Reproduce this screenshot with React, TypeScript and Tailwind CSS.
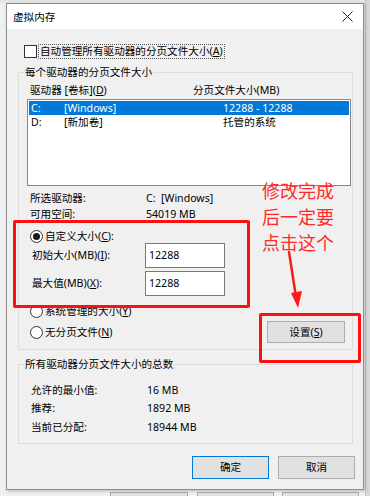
import React from "react";

function Radio({ checked }: { checked?: boolean }) {
  return (
    <span className="w-[13px] h-[13px] rounded-full border border-[#333] bg-white flex items-center justify-center shrink-0">
      {checked && <span className="w-[7px] h-[7px] rounded-full bg-[#1a1a1a]" />}
    </span>
  );
}

function GroupBox({ title, className, children }: { title: string; className?: string; children: React.ReactNode }) {
  return (
    <div className={"relative border border-[#dcdcdc] " + (className ?? "")}>
      <span className="absolute left-[5px] -top-[8px] bg-[#f0f0f0] px-[1px] leading-[14px]">{title}</span>
      {children}
    </div>
  );
}

export default function App() {
  return (
    <div className="relative w-[370px] h-[496px] overflow-hidden bg-[#f0f0f0] pt-[3px] pl-[6px] font-['Noto_Sans','Noto_Sans_CJK_SC',sans-serif] text-[10.6px] leading-[13px] text-black">
      {/* stuff behind the dialog */}
      <div className="absolute left-0 top-0 w-[370px] h-[3px] bg-[#e6e6e6]" />
      <div className="absolute right-0 top-0 w-[5px] h-[496px] bg-[#d8d8d8] border-l border-[#c4c4c4]" />
      <div className="absolute left-[110px] top-[492px] w-[78px] h-[10px] bg-[#e1e1e1] border border-[#adadad]" />
      <div className="absolute left-[197px] top-[492px] w-[77px] h-[10px] bg-[#e1e1e1] border border-[#adadad]" />
      <div className="absolute left-[282px] top-[492px] w-[77px] h-[10px] bg-[#e1e1e1] border border-[#adadad]" />

      {/* dialog */}
      <div className="relative w-[358px] h-[487px] border border-[#8f8f8f] bg-[#f0f0f0] shadow-[1px_1px_3px_rgba(0,0,0,0.25)] flex flex-col">
        {/* title bar */}
        <div className="h-[25px] bg-white flex items-center justify-between pl-[6px] pr-[10px]">
          <span className="font-['Noto_Sans_CJK_SC',sans-serif] leading-[14px] text-black">虚拟内存</span>
          <svg width="11" height="11" viewBox="0 0 11 11">
            <path d="M0.5 0.5 L10.5 10.5 M10.5 0.5 L0.5 10.5" stroke="#222" strokeWidth="1" />
          </svg>
        </div>

        {/* auto manage */}
        <div className="mt-[15px] ml-[17px] h-[14px] flex items-center gap-[1px]">
          <span className="w-[13px] h-[13px] border border-[#333] bg-white shrink-0" />
          <span className="border border-dotted border-[#555] px-[1px] leading-[13px]">
            自动管理所有驱动器的分页文件大小(<u>A</u>)
          </span>
        </div>

        {/* per-drive */}
        <GroupBox title="每个驱动器的分页文件大小" className="mt-[14px] ml-[11px] mr-[10px] h-[278px] flex flex-col">
          <div className="mt-[9px] h-[16px] pl-[11px] flex items-center">
            <span className="w-[163px]">
              驱动器 [卷标](<u>D</u>)
            </span>
            <span>分页文件大小(MB)</span>
          </div>
          <div className="mt-[1px] ml-[8px] mr-[1px] h-[87px] border border-[#828790] bg-white pt-[1px]">
            <div className="mx-[1px] h-[14px] bg-[#0078d7] text-white flex items-center pl-[2px]">
              <span className="w-[33px]">C:</span>
              <span className="w-[159px]">[Windows]</span>
              <span>12288 - 12288</span>
            </div>
            <div className="mx-[1px] h-[14px] flex items-center pl-[2px]">
              <span className="w-[33px]">D:</span>
              <span className="w-[159px]">[新加卷]</span>
              <span>托管的系统</span>
            </div>
          </div>

          <div className="mt-[5px] h-[15px] pl-[11px] flex items-center">
            <span className="w-[116px]">所选驱动器:</span>
            <span>C:&nbsp;&nbsp;[Windows]</span>
          </div>
          <div className="h-[16px] pl-[11px] flex items-center">
            <span className="w-[116px]">可用空间:</span>
            <span>54019 MB</span>
          </div>

          <div className="mt-[7px] h-[14px] pl-[11px] flex items-center gap-[2px]">
            <Radio checked />
            <span>
              自定义大小(<u>C</u>):
            </span>
          </div>
          <div className="h-[25px] pl-[13px] flex items-center">
            <span className="w-[113px]">
              初始大小(MB)(<u>I</u>):
            </span>
            <div className="w-[80px] h-[25px] border border-[#7a7a7a] bg-white pl-[3px] pt-[3px] leading-[16px]">12288</div>
          </div>
          <div className="mt-[3px] h-[25px] pl-[13px] flex items-center">
            <span className="w-[113px]">
              最大值(MB)(<u>X</u>):
            </span>
            <div className="w-[80px] h-[25px] border border-[#7a7a7a] bg-white pl-[3px] pt-[3px] leading-[16px]">12288</div>
          </div>

          <div className="mt-[8px] h-[14px] pl-[11px] flex items-center gap-[2px]">
            <Radio />
            <span>
              系统管理的大小(<u>Y</u>)
            </span>
          </div>
          <div className="mt-[3px] h-[22px] pl-[11px] pr-[7px] flex items-center">
            <div className="flex items-center gap-[2px] flex-1">
              <Radio />
              <span>
                无分页文件(<u>N</u>)
              </span>
            </div>
            <button className="w-[78px] h-[22px] bg-[#e1e1e1] border border-[#adadad] text-[10.6px] text-black leading-[20px]">
              设置(<u>S</u>)
            </button>
          </div>
        </GroupBox>

        {/* totals */}
        <GroupBox title="所有驱动器分页文件大小的总数" className="mt-[14px] ml-[11px] mr-[10px] h-[80px] flex flex-col">
          <div className="mt-[16px] h-[18px] pl-[12px] flex items-center">
            <span className="w-[116px]">允许的最小值:</span>
            <span>16 MB</span>
          </div>
          <div className="h-[18px] pl-[12px] flex items-center">
            <span className="w-[116px]">推荐:</span>
            <span>1892 MB</span>
          </div>
          <div className="mt-[1px] h-[18px] pl-[12px] flex items-center">
            <span className="w-[116px]">当前已分配:</span>
            <span>18944 MB</span>
          </div>
        </GroupBox>

        {/* dialog buttons */}
        <div className="mt-[12px] mr-[8px] flex justify-end gap-[9px]">
          <button className="w-[77px] h-[23px] bg-[#e1e1e1] border border-[#0078d7] text-[10.6px] text-black">确定</button>
          <button className="w-[77px] h-[23px] bg-[#e1e1e1] border border-[#adadad] text-[10.6px] text-black">取消</button>
        </div>

        {/* red annotations */}
        <div className="absolute left-[6px] top-[216px] w-[237px] h-[88px] border-[3px] border-[#ff1010] rounded-[2px]" />
        <div className="absolute left-[252px] top-[309px] w-[102px] h-[50px] border-[3px] border-[#ff1010] rounded-[2px]" />
        <div className="absolute left-[255px] top-[173px] text-[18px] leading-[26px] text-[#ff2a2a] font-['Noto_Sans_CJK_SC',sans-serif]">
          <div>修改完成</div>
          <div>后一定要</div>
          <div>点击这个</div>
        </div>
        <svg className="absolute left-[270px] top-[245px]" width="30" height="62" viewBox="0 0 30 62">
          <path d="M12 3 L19 48" stroke="#ff1a1a" strokeWidth="2.5" strokeLinecap="round" />
          <path d="M14 44 L25 42 L21 59 Z" fill="#ff1a1a" />
        </svg>
      </div>
    </div>
  );
}
